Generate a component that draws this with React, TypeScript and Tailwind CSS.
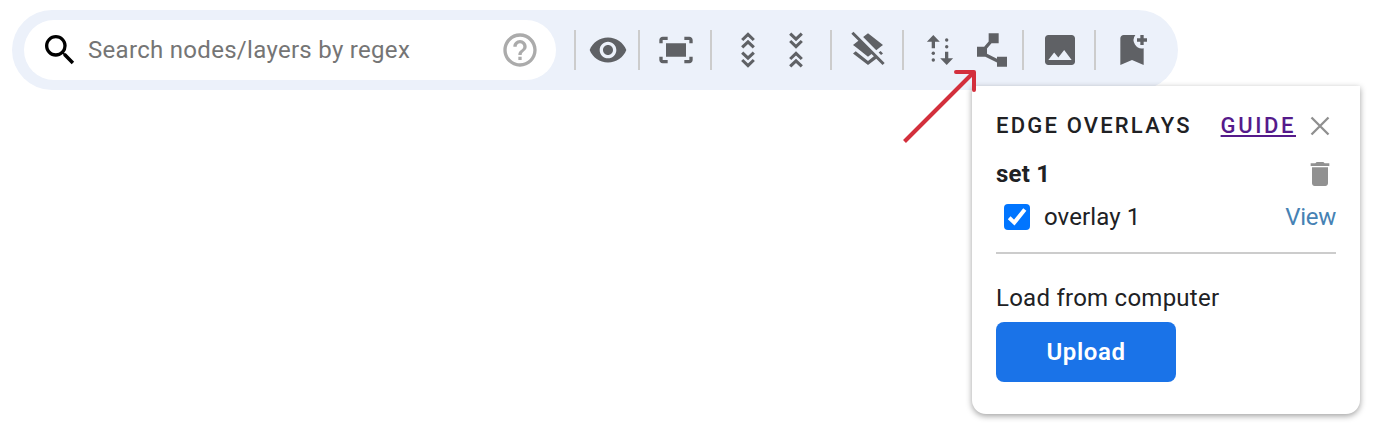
import React from "react";
import {
  MdBookmarkAdd,
  MdDelete,
  MdFitScreen,
  MdHelpOutline,
  MdImage,
  MdLayersClear,
  MdPolyline,
  MdSearch,
  MdVisibility,
} from "react-icons/md";

function Divider({ className }: { className: string }) {
  return <div className={`h-10 w-0.5 shrink-0 bg-[#ccc] ${className}`} />;
}

function Tool({ className, label, children }: { className?: string; label: string; children: React.ReactNode }) {
  return (
    <button aria-label={label} className={`size-10 shrink-0 text-[#5f6165] ${className ?? ""}`}>
      {children}
    </button>
  );
}

function Chevrons({ paths }: { paths: string }) {
  return (
    <svg viewBox="0 0 40 40" className="size-10" fill="none" stroke="currentColor" strokeWidth="3.1">
      <path d={paths} />
    </svg>
  );
}

function SwapArrows() {
  return (
    <svg viewBox="0 0 40 40" className="size-10" fill="currentColor">
      <path d="M13.3 5 19.8 11.7H15v6.6h-3.3v-6.6H6.9z" />
      <circle cx="13.3" cy="23.3" r="1.7" />
      <circle cx="13.3" cy="30" r="1.7" />
      <circle cx="26.7" cy="10" r="1.7" />
      <circle cx="26.7" cy="16.7" r="1.7" />
      <path d="M26.7 35 20.2 28.3H25v-6.6h3.3v6.6h4.8z" />
    </svg>
  );
}

function OverlayPanel() {
  return (
    <section className="absolute top-[86px] left-[972px] h-[328px] w-[388px] rounded-b-[14px] bg-white px-6 pt-6 text-[#202124] shadow-[0_2px_6px_rgba(0,0,0,0.38)]">
      <header className="flex h-8 items-center">
        <h2 className="pb-0.5 text-[22px] font-medium tracking-[2.2px]">EDGE OVERLAYS</h2>
        <a className="ml-auto pb-0.5 text-[22px] font-medium tracking-[2.6px] text-[#551a8b] underline decoration-2 underline-offset-2">
          GUIDE
        </a>
        <button aria-label="Close" className="ml-2 size-8">
          <svg viewBox="0 0 32 32" className="size-8" fill="none" stroke="#8f8f8f" strokeWidth="2.3">
            <path d="M7.5 7.5l17 17M24.5 7.5l-17 17" />
          </svg>
        </button>
      </header>
      <div className="mt-4 flex h-8 items-center justify-between">
        <span className="text-2xl font-bold tracking-[0.2px]">set 1</span>
        <MdDelete className="size-8 text-[#919191]" />
      </div>
      <div className="mt-[11px] flex h-8 items-center">
        <span className="ml-2 flex size-[26px] items-center justify-center rounded bg-[#0075ff]">
          <svg viewBox="0 0 26 26" className="size-[26px]" fill="none" stroke="white" strokeWidth="4">
            <path d="M5.2 13.8l5.1 4.8L20.8 5.4" />
          </svg>
        </span>
        <span className="ml-3.5 text-2xl tracking-[0.1px]">overlay 1</span>
        <a className="ml-auto text-2xl tracking-[-0.3px] text-[#4682b4]">View</a>
      </div>
      <div className="mt-[19px] h-0.5 bg-[#ccc]" />
      <div className="mt-7 text-2xl leading-8 tracking-[0.25px]">Load from computer</div>
      <button className="mt-2 h-[60px] w-[180px] rounded-lg bg-[#1a73e8] text-2xl font-semibold tracking-[0.6px] text-white">
        Upload
      </button>
    </section>
  );
}

export default function App() {
  return (
    <main className="relative h-[446px] w-[1392px] overflow-hidden bg-white pt-2.5 pl-3 font-[Roboto,sans-serif]">
      <div className="flex h-20 w-[1166px] items-center rounded-full bg-[#ecf1fa] pl-3">
        <div className="flex h-[60px] w-[532px] shrink-0 items-center rounded-full bg-white px-4">
          <MdSearch className="size-10 text-black" />
          <span className="ml-2 text-2xl tracking-[0.3px] whitespace-nowrap text-[#757575]">
            Search nodes/layers by regex
          </span>
          <MdHelpOutline className="ml-auto size-10 text-[#ababab]" />
        </div>
        <Divider className="ml-[18px]" />
        <Tool label="Visibility" className="ml-3"><MdVisibility className="size-10" /></Tool>
        <Divider className="ml-2.5" />
        <Tool label="Fit" className="ml-4"><MdFitScreen className="size-10" /></Tool>
        <Divider className="ml-3.5" />
        <Tool label="Expand all" className="ml-4">
          <Chevrons paths="M14.2 10l5.8-5.6 5.8 5.6M14.2 17.4l5.8-5.6 5.8 5.6M14.2 22.6l5.8 5.6 5.8-5.6M14.2 30l5.8 5.6 5.8-5.6" />
        </Tool>
        <Tool label="Collapse all" className="ml-2">
          <Chevrons paths="M14.2 3.6l5.8 5.6 5.8-5.6M14.2 11l5.8 5.6 5.8-5.6M14.2 29l5.8-5.6 5.8 5.6M14.2 36.4l5.8-5.6 5.8 5.6" />
        </Tool>
        <Divider className="ml-3.5" />
        <Tool label="Flatten layers" className="ml-4"><MdLayersClear className="size-10" /></Tool>
        <Divider className="ml-3.5" />
        <Tool label="Trace" className="ml-4"><SwapArrows /></Tool>
        <Tool label="Edge overlays" className="ml-3"><MdPolyline className="size-10" /></Tool>
        <Divider className="ml-2.5" />
        <Tool label="Export image" className="ml-4"><MdImage className="size-10" /></Tool>
        <Divider className="ml-3.5" />
        <Tool label="Add bookmark" className="ml-4"><MdBookmarkAdd className="size-10" /></Tool>
      </div>
      <OverlayPanel />
      <svg
        viewBox="900 66 80 80"
        className="absolute top-[66px] left-[900px] size-20"
        fill="none"
        stroke="#d32f3c"
        strokeWidth="4"
        strokeLinejoin="round"
      >
        <path d="M904.5 141.5L973 73" />
        <path d="M956 72h18v18" strokeLinecap="round" />
      </svg>
    </main>
  );
}
